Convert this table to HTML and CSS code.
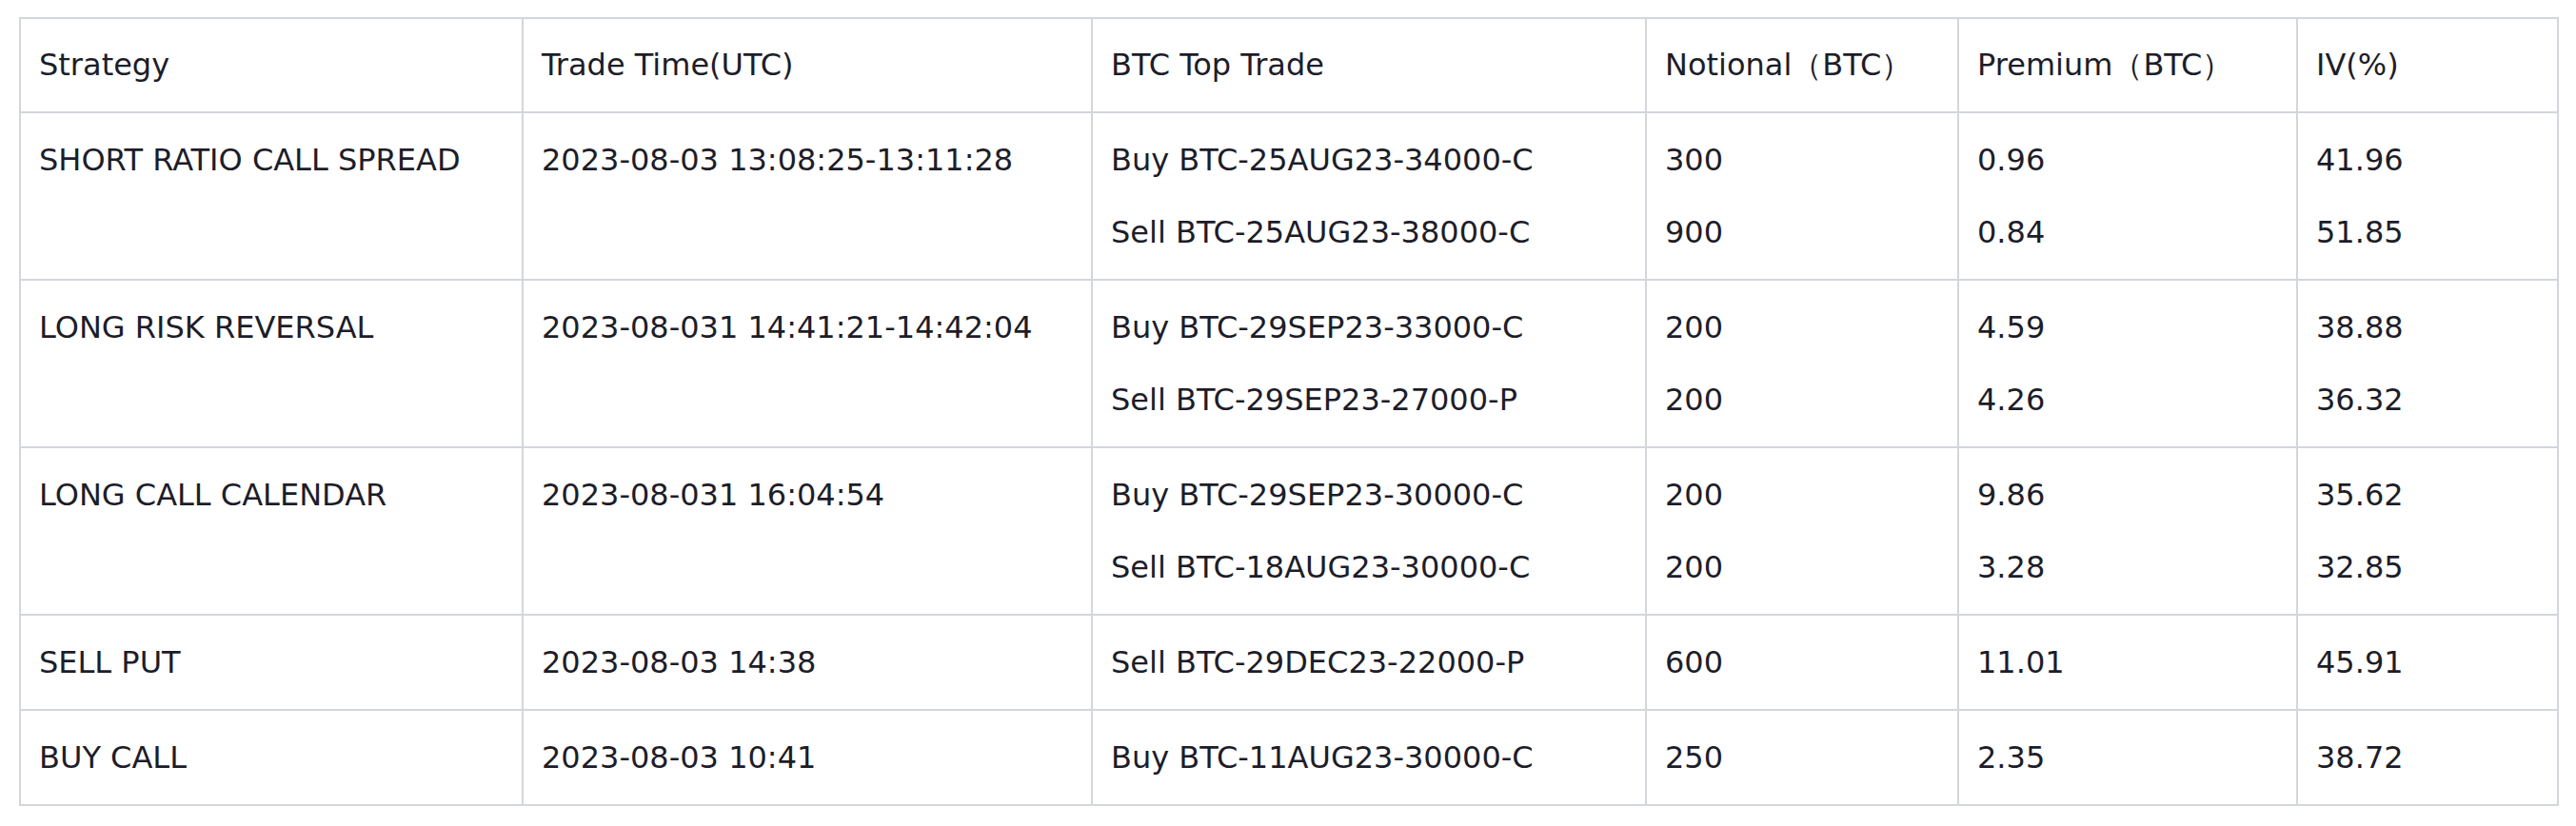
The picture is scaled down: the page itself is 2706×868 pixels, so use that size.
FILE: index.html
```html
<!DOCTYPE html>
<html lang="en">
<head>
<meta charset="utf-8">
<title>BTC Block Trades</title>
<link rel="stylesheet" href="styles.css">
</head>
<body>
<table class="trades">
  <colgroup>
    <col class="c-strategy">
    <col class="c-time">
    <col class="c-trade">
    <col class="c-notional">
    <col class="c-premium">
    <col class="c-iv">
  </colgroup>
  <thead>
    <tr>
      <th>Strategy</th>
      <th>Trade Time(UTC)</th>
      <th>BTC Top Trade</th>
      <th>Notional（BTC）</th>
      <th>Premium（BTC）</th>
      <th>IV(%)</th>
    </tr>
  </thead>
  <tbody>
    <tr>
      <td>SHORT RATIO CALL SPREAD</td>
      <td>2023-08-03 13:08:25-13:11:28</td>
      <td><div>Buy BTC-25AUG23-34000-C</div><div>Sell BTC-25AUG23-38000-C</div></td>
      <td><div>300</div><div>900</div></td>
      <td><div>0.96</div><div>0.84</div></td>
      <td><div>41.96</div><div>51.85</div></td>
    </tr>
    <tr>
      <td>LONG RISK REVERSAL</td>
      <td>2023-08-031 14:41:21-14:42:04</td>
      <td><div>Buy BTC-29SEP23-33000-C</div><div>Sell BTC-29SEP23-27000-P</div></td>
      <td><div>200</div><div>200</div></td>
      <td><div>4.59</div><div>4.26</div></td>
      <td><div>38.88</div><div>36.32</div></td>
    </tr>
    <tr>
      <td>LONG CALL CALENDAR</td>
      <td>2023-08-031 16:04:54</td>
      <td><div>Buy BTC-29SEP23-30000-C</div><div>Sell BTC-18AUG23-30000-C</div></td>
      <td><div>200</div><div>200</div></td>
      <td><div>9.86</div><div>3.28</div></td>
      <td><div>35.62</div><div>32.85</div></td>
    </tr>
    <tr>
      <td>SELL PUT</td>
      <td>2023-08-03 14:38</td>
      <td>Sell BTC-29DEC23-22000-P</td>
      <td>600</td>
      <td>11.01</td>
      <td>45.91</td>
    </tr>
    <tr>
      <td>BUY CALL</td>
      <td>2023-08-03 10:41</td>
      <td>Buy BTC-11AUG23-30000-C</td>
      <td>250</td>
      <td>2.35</td>
      <td>38.72</td>
    </tr>
  </tbody>
</table>
</body>
</html>
```
FILE: styles.css
```css
html, body {
  margin: 0;
  background: #ffffff;
}

body {
  padding: 18px 0 0 20px;
  font-family: "DejaVu Sans", Verdana, sans-serif;
  font-size: 32px;
  color: #1d1d29;
}

.trades {
  border-collapse: collapse;
  table-layout: fixed;
  width: 2668px;
}

.c-strategy { width: 528px; }
.c-time { width: 598px; }
.c-trade { width: 582px; }
.c-notional { width: 328px; }
.c-premium { width: 356px; }
.c-iv { width: 274px; }

.trades th,
.trades td {
  border: 2px solid #d3d6dc;
  padding: 11px 18px 11px 19px;
  line-height: 76px;
  text-align: left;
  vertical-align: top;
  font-weight: normal;
  white-space: nowrap;
}

.trades th {
  padding-top: 10px;
  padding-bottom: 11px;
}
```
